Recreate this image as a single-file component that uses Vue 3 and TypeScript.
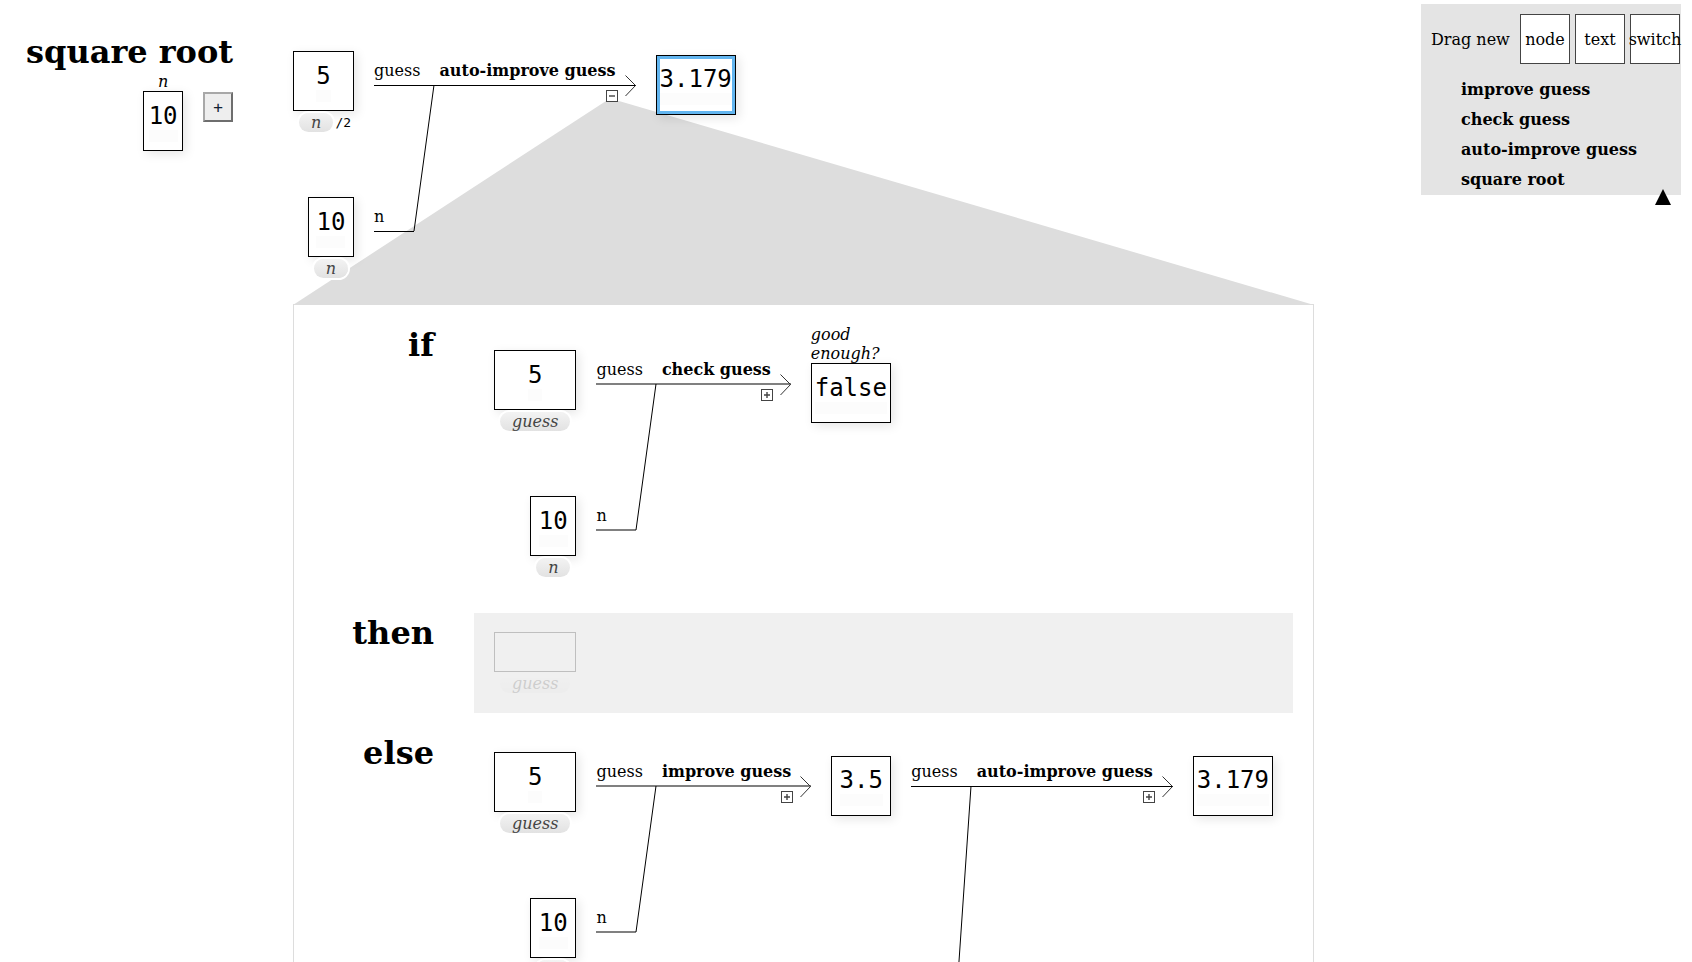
<script setup lang="ts">
import { ref } from 'vue'

interface Token { kind: 'ref' | 'code'; text: string }
interface ValueNode { value: string; formula: Token[] }
interface Result { value: string; label?: string; selected?: boolean }
interface Call {
  name: string
  params: string[]
  open: boolean
  soft?: boolean
  reach?: number
  result: Result
}
interface Row { title: string; args: ValueNode[]; calls: Call[]; labelled?: boolean; inactive?: boolean }
interface Scope { kind: 'root' | 'expansion'; rows: Row[] }

const token = (text: string): Token => ({ kind: 'ref', text })

const scopes = ref<Scope[]>([
  {
    kind: 'root',
    rows: [
      {
        title: 'square root',
        args: [
          { value: '5', formula: [token('n'), { kind: 'code', text: '/2' }] },
          { value: '10', formula: [token('n')] },
        ],
        calls: [
          { name: 'auto-improve guess', params: ['guess', 'n'], open: true, result: { value: '3.179', selected: true } },
        ],
      },
    ],
  },
  {
    kind: 'expansion',
    rows: [
      {
        title: 'if',
        labelled: true,
        args: [
          { value: '5', formula: [token('guess')] },
          { value: '10', formula: [token('n')] },
        ],
        calls: [
          { name: 'check guess', params: ['guess', 'n'], open: false, soft: true, result: { value: 'false', label: 'good enough?' } },
        ],
      },
      {
        title: 'then',
        inactive: true,
        args: [{ value: '', formula: [token('guess')] }],
        calls: [],
      },
      {
        title: 'else',
        args: [
          { value: '5', formula: [token('guess')] },
          { value: '10', formula: [token('n')] },
        ],
        calls: [
          { name: 'improve guess', params: ['guess', 'n'], open: false, soft: true, result: { value: '3.5' } },
          { name: 'auto-improve guess', params: ['guess'], open: false, reach: 292, result: { value: '3.179' } },
        ],
      },
    ],
  },
])

const tools = ['node', 'text', 'switch']
const functions = ['improve guess', 'check guess', 'auto-improve guess', 'square root']
</script>

<template>
  <main class="canvas">
    <section v-for="scope in scopes" :key="scope.kind" class="scope" :class="scope.kind">
      <svg v-if="scope.kind === 'expansion'" class="beam" viewBox="0 0 1021 204" preserveAspectRatio="none" aria-hidden="true">
        <polygon points="313,0 326,0 1021,204 0,204" fill="#ddd" />
      </svg>

      <div
        v-for="row in scope.rows"
        :key="row.title"
        class="row"
        :class="{ labelled: row.labelled, inactive: row.inactive }"
      >
        <header class="head">
          <h1 v-if="scope.kind === 'root'" class="title">{{ row.title }}</h1>
          <h2 v-else class="title">{{ row.title }}</h2>
          <div v-if="scope.kind === 'root'" class="signature">
            <div class="param">
              <span class="caption">n</span>
              <div class="node"><span class="value">10</span></div>
            </div>
            <button type="button" class="add" aria-label="Add parameter">+</button>
          </div>
        </header>

        <div class="body">
          <div class="args">
            <div v-for="(arg, i) in row.args" :key="i" class="arg">
              <div class="node"><span v-if="arg.value" class="value">{{ arg.value }}</span></div>
              <div class="formula">
                <template v-for="t in arg.formula" :key="t.text">
                  <span v-if="t.kind === 'ref'" class="pill">{{ t.text }}</span>
                  <code v-else class="code">{{ t.text }}</code>
                </template>
              </div>
            </div>
          </div>

          <template v-for="(call, c) in row.calls" :key="c">
            <div class="link" :class="{ soft: call.soft }">
              <div class="lead">
                <span class="port">{{ call.params[0] }}</span>
                <strong class="name">{{ call.name }}</strong>
                <svg class="tip" viewBox="0 0 11 22" aria-hidden="true">
                  <path d="M0.5 0.5 L10.5 10.5 L0.5 21" fill="none" stroke="#333" />
                </svg>
                <button
                  type="button"
                  class="toggle"
                  :aria-label="call.open ? 'Collapse' : 'Expand'"
                  :aria-expanded="call.open"
                >
                  <svg viewBox="0 0 12 12" aria-hidden="true">
                    <rect x="0.5" y="0.5" width="11" height="11" fill="#fff" stroke="#444" />
                    <path :d="call.open ? 'M3 6H9' : 'M3 6H9M6 3V9'" stroke="#444" stroke-width="1.4" />
                  </svg>
                </button>
              </div>
              <div v-for="p in call.params.slice(1)" :key="p" class="branch">{{ p }}</div>
              <svg class="join" width="22" :height="call.reach ?? 146" :viewBox="`0 0 22 ${call.reach ?? 146}`" aria-hidden="true">
                <line x1="20" y1="0" x2="0" :y2="call.reach ?? 146" stroke="#000" />
              </svg>
            </div>

            <div class="result" :class="{ captioned: call.result.label }">
              <span v-if="call.result.label" class="caption">{{ call.result.label }}</span>
              <div class="node" :class="{ selected: call.result.selected }">
                <span class="value">{{ call.result.value }}</span>
              </div>
            </div>
          </template>
        </div>
      </div>
    </section>

    <aside class="palette">
      <div class="tools">
        <span class="hint">Drag new</span>
        <button v-for="tool in tools" :key="tool" type="button" class="tool">{{ tool }}</button>
      </div>
      <ul class="functions">
        <li v-for="fn in functions" :key="fn" draggable="true">{{ fn }}</li>
      </ul>
      <button type="button" class="collapse" aria-label="Collapse palette">
        <svg viewBox="0 0 16 16" aria-hidden="true"><path d="M8 0 L16 16 H0 Z" fill="#000" /></svg>
      </button>
    </aside>
  </main>
</template>

<style>
body {
  margin: 0;
  background: #fff;
}
</style>

<style scoped>
.canvas {
  position: relative;
  isolation: isolate;
  box-sizing: border-box;
  height: 100vh;
  overflow: hidden;
  padding: 32px 0 0 26px;
  font: 16px/19px "DejaVu Serif", serif;
  color: #000;
}

.scope {
  position: relative;
  width: max-content;
}

.root {
  padding-bottom: 6px;
}

.expansion {
  box-sizing: border-box;
  display: flex;
  flex-direction: column;
  gap: 20px;
  margin-left: 267px;
  padding: 20px 20px 20px 0;
  border: 1px solid #ddd;
}

.beam {
  position: absolute;
  z-index: -1;
  left: -1px;
  bottom: 100%;
  width: calc(100% + 2px);
  height: 204px;
}

.row {
  display: flex;
  gap: 60px;
}

.expansion .row {
  gap: 40px;
}

.head {
  display: flex;
  flex-direction: column;
  align-items: flex-end;
  padding-top: 2px;
}

.expansion .head {
  flex: 0 0 140px;
}

.title {
  margin: 0;
  font-size: 32px;
  line-height: 37px;
  font-weight: bold;
}

.signature {
  display: flex;
  gap: 20px;
  align-items: flex-start;
  padding-top: 1px;
}

.param {
  display: flex;
  flex-direction: column;
  align-items: center;
}

.caption {
  font-style: italic;
}

.add {
  width: 30px;
  height: 30px;
  margin-top: 20px;
  padding: 0;
  border: 2px solid;
  border-color: #a8a8a8 #6e6e6e #6e6e6e #a8a8a8;
  background: #eee;
  color: #123;
  font: 16px "DejaVu Sans Mono", monospace;
}

.body {
  display: flex;
  flex: 1;
  gap: 20px;
  align-items: flex-start;
  padding-bottom: 20px;
}

.expansion .body {
  padding-left: 20px;
  padding-right: 20px;
}

.labelled .body {
  padding-bottom: 16px;
}

.inactive .body {
  background: #f0f0f0;
}

.args {
  display: flex;
  flex-direction: column;
  gap: 65px;
  align-items: flex-end;
  padding-top: 19px;
}

.labelled .args {
  padding-top: 25px;
}

.arg {
  display: flex;
  flex-direction: column;
}

.node {
  position: relative;
  box-sizing: border-box;
  display: flex;
  flex-direction: column;
  align-items: center;
  min-width: 40px;
  height: 60px;
  padding: 10px 3px 0;
  border: 1px solid #000;
  background: #fff;
  box-shadow: 3px 3px 10px rgba(0, 0, 0, 0.1);
}

.value {
  font: 24px/28px "DejaVu Sans Mono", monospace;
}

.value::after {
  content: "";
  display: block;
  height: 12px;
  background: #fcfcfc;
}

.result .node {
  min-width: 60px;
  padding-top: 9px;
}

.captioned .node {
  padding-top: 10px;
}

.selected::before {
  content: "";
  position: absolute;
  inset: 0;
  border: 3px solid #62b5ef;
}

.formula {
  display: flex;
  align-items: center;
  height: 19px;
  padding: 2px 6px 0;
}

.pill {
  position: relative;
  padding: 0 12px;
  border-radius: 10px;
  background: linear-gradient(#f3f3f3, #e2e2e2);
  box-shadow: 0 0 0 2px #fff;
  color: #444;
  font-style: italic;
}

.code {
  margin: 0 -3px 0 2px;
  font: 13px/19px "DejaVu Sans Mono", monospace;
}

.inactive .arg {
  opacity: 0.2;
}

.inactive .node {
  height: 40px;
  background: transparent;
  box-shadow: none;
}

.inactive .pill {
  box-shadow: none;
}

.link {
  position: relative;
  padding-top: 29px;
}

.labelled .link {
  padding-top: 35px;
}

.lead {
  position: relative;
  display: flex;
  gap: 19px;
  height: 24px;
  padding-right: 20px;
  border-bottom: 1px solid #000;
}

.branch {
  box-sizing: border-box;
  width: 40px;
  height: 25px;
  margin-top: 121px;
  border-bottom: 1px solid #000;
}

.soft .lead {
  height: 23px;
  border-bottom: 2px solid #808080;
}

.soft .branch {
  border-bottom: 2px solid #808080;
}

.join {
  position: absolute;
  top: 53px;
  left: 40px;
  overflow: visible;
}

.labelled .join {
  top: 59px;
}

.tip {
  position: absolute;
  right: 0;
  top: 14px;
  width: 11px;
  height: 22px;
}

.toggle {
  position: absolute;
  right: 18px;
  top: 29px;
  width: 12px;
  height: 12px;
  padding: 0;
  border: 0;
  background: none;
}

.toggle svg,
.collapse svg {
  display: block;
  width: 100%;
  height: 100%;
}

.result {
  padding-top: 23px;
}

.captioned {
  display: flex;
  flex-direction: column;
  width: 80px;
  padding-top: 0;
}

.palette {
  position: absolute;
  top: 4px;
  right: 11px;
  box-sizing: border-box;
  width: 260px;
  padding: 10px 1px 0 10px;
  background: #e4e4e4;
}

.tools {
  display: flex;
  gap: 5px;
  align-items: center;
}

.hint {
  flex: 1;
  white-space: nowrap;
}

.tool {
  display: flex;
  align-items: center;
  justify-content: center;
  width: 50px;
  height: 50px;
  padding: 0;
  border: 1px solid #444;
  background: #fff;
  color: #000;
  font: inherit;
}

.functions {
  margin: 0;
  padding: 11px 0 0 30px;
  list-style: none;
  font-weight: bold;
  line-height: 30px;
}

.collapse {
  position: absolute;
  right: 10px;
  bottom: -10px;
  width: 16px;
  height: 16px;
  padding: 0;
  border: 0;
  background: none;
}
</style>
